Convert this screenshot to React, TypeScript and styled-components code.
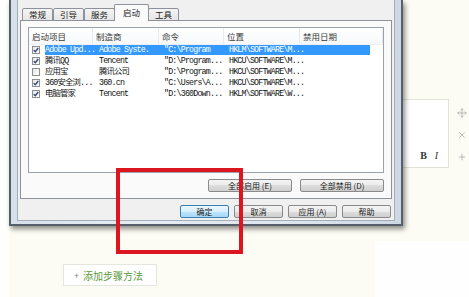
import styled, { createGlobalStyle } from 'styled-components';
import { Move, X, Plus } from 'lucide-react';

const GlobalStyle = createGlobalStyle`
  html, body {
    margin: 0;
    padding: 0;
    background: #fcfbf5;
  }
  body {
    font-family: "Noto Sans CJK SC", "Noto Sans", sans-serif;
  }
`

const Page = styled.div`
  position: relative;
  width: 469px;
  height: 297px;
  overflow: hidden;
  background: linear-gradient(90deg, #fefefd 0, #fefefd 9px, #fcfbf4 9px);
`

const EditorRow = styled.div`
  display: flex;
  align-items: flex-start;
  padding: 99px 0 0 300px;
`

const EditorBox = styled.div`
  box-sizing: border-box;
  width: 151px;
  height: 69px;
  border: 1px solid #dfe5d6;
  background: #fff;
  display: flex;
  align-items: flex-end;
  justify-content: flex-end;
  gap: 8px;
  padding: 0 10px 5px 0;
`

const FormatBtn = styled.span<{ $italic?: boolean }>`
  font-family: "Liberation Serif", serif;
  font-size: 10px;
  line-height: 12px;
  font-weight: ${p => (p.$italic ? 'normal' : 'bold')};
  font-style: ${p => (p.$italic ? 'italic' : 'normal')};
  color: #333;
`

const IconColumn = styled.div`
  display: flex;
  flex-direction: column;
  align-items: center;
  gap: 12px;
  width: 15px;
  margin-left: 5px;
  padding-top: 9px;
  color: #9a9a9a;
`

const BottomRow = styled.div`
  display: flex;
  align-items: flex-start;
`

const AddButton = styled.div`
  box-sizing: border-box;
  margin: 96px 0 0 63px;
  width: 94px;
  height: 22px;
  border: 1px solid #e6e6e1;
  background: #fff;
  display: flex;
  align-items: center;
  padding-left: 10px;
  gap: 4px;
  font-size: 10px;
  color: #5a9a3a;
`

const AddPlus = styled.span`
  color: #888;
  font-size: 9px;
`

const WhiteBlock = styled.div`
  margin: 73px 0 0 auto;
  width: 94px;
  height: 57px;
  background: #fefefe;
`

/* the dialog window */
const Dialog = styled.div`
  position: absolute;
  left: 9px;
  top: 0;
  box-sizing: border-box;
  width: 394px;
  height: 226px;
  border: 2px solid #56606b;
  border-top: none;
  padding: 0 6px 3px 6px;
  background: linear-gradient(90deg, #d6e0ea, #e6ecf2 30%, #dfe6ee 70%, #cdd8e4);
  box-shadow: 2px 3px 5px rgba(0, 0, 0, 0.45);
`

const Content = styled.div`
  box-sizing: border-box;
  height: 100%;
  border: 1px solid #a3aebb;
  border-top: none;
  background: #f0f0f0;
  padding: 4px 2px 2px 2px;
  display: flex;
  flex-direction: column;
`

const TabRow = styled.div`
  display: flex;
  align-items: flex-end;
  height: 17px;
  padding-left: 2px;
  margin-bottom: -1px;
  position: relative;
  z-index: 1;
`

const Tab = styled.div<{ $active?: boolean }>`
  box-sizing: border-box;
  height: ${p => (p.$active ? 17 : 13)}px;
  padding: 0 ${p => (p.$active ? 8 : 6)}px;
  margin: 0 ${p => (p.$active ? -1 : 0)}px;
  border: 1px solid #8d929a;
  border-bottom: ${p => (p.$active ? 'none' : '1px solid #8d929a')};
  border-radius: 2px 2px 0 0;
  background: ${p => (p.$active ? '#fafafa' : 'linear-gradient(#f4f4f4, #e6e6e6)')};
  font-size: 8.5px;
  line-height: ${p => (p.$active ? 14 : 11)}px;
  color: #222;
  position: relative;
  z-index: ${p => (p.$active ? 2 : 1)};
`

const TabPanel = styled.div`
  box-sizing: border-box;
  border: 1px solid #8d929a;
  background: #fafafa;
  padding: 6px 7px 6px 7px;
  display: flex;
  flex-direction: column;
  gap: 6px;
`

const ListBox = styled.div`
  box-sizing: border-box;
  height: 146px;
  border: 1px solid #9aa2ab;
  background: #fff;
  overflow: hidden;
`

const Header = styled.div`
  display: grid;
  grid-template-columns: 64px 66px 65px 76px 1fr;
  height: 16px;
  background: linear-gradient(#ffffff, #f7f8fa);
  border-bottom: 1px solid #eef0f3;
`

const HeaderCell = styled.div`
  padding-left: 3px;
  border-right: 1px solid #e8eaed;
  font-size: 8.5px;
  line-height: 16px;
  color: #3a3a3a;
  white-space: nowrap;
`

const Row = styled.div`
  display: flex;
  align-items: center;
  height: 10.8px;
`

const CheckBox = styled.span`
  box-sizing: border-box;
  width: 8px;
  height: 8px;
  margin: 0 5px 0 3px;
  border: 1px solid #8e8f8f;
  background: linear-gradient(135deg, #e6e6e6, #ffffff);
  display: flex;
  align-items: center;
  justify-content: center;
`

const RowBody = styled.div<{ $selected?: boolean }>`
  display: flex;
  align-items: center;
  width: 325px;
  height: 10px;
  background: ${p => (p.$selected ? '#3399ff' : 'transparent')};
  color: ${p => (p.$selected ? '#ffffff' : '#111')};
`

const Cell = styled.span<{ $w: number }>`
  width: ${p => p.$w}px;
  flex: none;
  overflow: hidden;
  white-space: nowrap;
  font-family: "Liberation Mono", "Noto Sans CJK SC", monospace;
  font-size: 8.3px;
  letter-spacing: -0.8px;
  line-height: 10px;
`

const ButtonRow = styled.div<{ $gap: number }>`
  display: flex;
  justify-content: flex-end;
  gap: ${p => p.$gap}px;
`

const BottomButtons = styled(ButtonRow)`
  margin-top: 6px;
  padding-right: 1px;
`

const Btn = styled.div<{ $w: number; $primary?: boolean }>`
  box-sizing: border-box;
  width: ${p => p.$w}px;
  height: 13px;
  border: 1px solid ${p => (p.$primary ? '#3c7fb1' : '#8a8a8a')};
  border-radius: 2px;
  background: ${p =>
    p.$primary
      ? 'linear-gradient(#eaf6fd, #d9f0fc 50%, #bee6fd 50%, #a7d9f5)'
      : 'linear-gradient(#f4f4f4, #ebebeb 50%, #dddddd 50%, #cfcfcf)'};
  font-size: 8px;
  line-height: 11px;
  text-align: center;
  color: #1a1a1a;
  white-space: nowrap;
`

const RedMark = styled.div`
  position: absolute;
  left: 116px;
  top: 168px;
  width: 127px;
  height: 86px;
  box-sizing: border-box;
  border: 4px solid #dc1620;
`

const tabs = ['常规', '引导', '服务', '启动', '工具']
const headers = ['启动项目', '制造商', '命令', '位置', '禁用日期']

const rows = [
  { on: true, selected: true, name: 'Adobe Upd...', maker: 'Adobe Syste.', cmd: '"C:\\Program', loc: 'HKLM\\SOFTWARE\\M...' },
  { on: true, name: '腾讯QQ', maker: 'Tencent', cmd: '"D:\\Program...', loc: 'HKCU\\SOFTWARE\\M...' },
  { on: false, name: '应用宝', maker: '腾讯公司', cmd: '"D:\\Program...', loc: 'HKCU\\SOFTWARE\\M...' },
  { on: true, name: '360安全浏...', maker: '360.cn', cmd: '"C:\\Users\\A...', loc: 'HKCU\\SOFTWARE\\M...' },
  { on: true, name: '电脑管家', maker: 'Tencent', cmd: '"D:\\360Down...', loc: 'HKLM\\SOFTWARE\\W...' },
]

const Tick = () => (
  <svg width="6" height="6" viewBox="0 0 6 6">
    <path d="M0.7 3.1 L2.3 4.7 L5.3 1" stroke="#2c4373" strokeWidth="1.3" fill="none" />
  </svg>
)

export default function App() {
  return (
    <Page>
      <GlobalStyle />
      <EditorRow>
        <EditorBox>
          <FormatBtn>B</FormatBtn>
          <FormatBtn $italic>I</FormatBtn>
        </EditorBox>
        <IconColumn>
          <Move size={10} strokeWidth={1.5} />
          <X size={10} strokeWidth={1.5} />
          <Plus size={10} strokeWidth={1.5} />
        </IconColumn>
      </EditorRow>
      <BottomRow>
        <AddButton>
          <AddPlus>+</AddPlus>
          添加步骤方法
        </AddButton>
        <WhiteBlock />
      </BottomRow>

      <Dialog>
        <Content>
          <TabRow>
            {tabs.map(t => (
              <Tab key={t} $active={t === '启动'}>{t}</Tab>
            ))}
          </TabRow>
          <TabPanel>
            <ListBox>
              <Header>
                {headers.map(h => (
                  <HeaderCell key={h}>{h}</HeaderCell>
                ))}
              </Header>
              {rows.map(r => (
                <Row key={r.name}>
                  <CheckBox>{r.on && <Tick />}</CheckBox>
                  <RowBody $selected={r.selected}>
                    <Cell $w={54}>{r.name}</Cell>
                    <Cell $w={65}>{r.maker}</Cell>
                    <Cell $w={65}>{r.cmd}</Cell>
                    <Cell $w={100}>{r.loc}</Cell>
                  </RowBody>
                </Row>
              ))}
            </ListBox>
            <ButtonRow $gap={8}>
              <Btn $w={84}>全部启用 (E)</Btn>
              <Btn $w={84}>全部禁用 (D)</Btn>
            </ButtonRow>
          </TabPanel>
          <BottomButtons $gap={5}>
            <Btn $w={49} $primary>确定</Btn>
            <Btn $w={49}>取消</Btn>
            <Btn $w={49}>应用 (A)</Btn>
            <Btn $w={49}>帮助</Btn>
          </BottomButtons>
        </Content>
      </Dialog>

      <RedMark />
    </Page>
  )
}
